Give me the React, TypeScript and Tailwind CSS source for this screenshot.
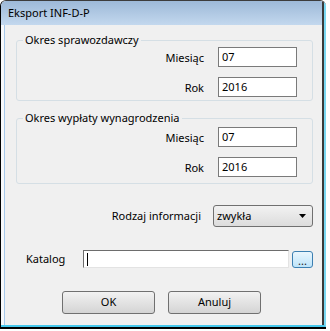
import React from 'react'

const font = { fontFamily: '"Noto Sans", "Open Sans", sans-serif' }

function Field({ label, value }: { label: string; value: string }) {
    return (
        <div className="flex items-center justify-end gap-[14px]">
            <span className="text-[11px] leading-none text-black">{label}</span>
            <div className="w-[79px] h-[20px] border border-[#7a7a7a] bg-white flex items-center pl-[3px] text-[11px] text-black">
                {value}
            </div>
        </div>
    )
}

function Group({ title, height, top, children }: { title: string; height: string; top: string; children: React.ReactNode }) {
    return (
        <div className={`relative ml-[11px] w-[297px] ${height} border border-[#d5dfe5] rounded-[3px] ${top} pr-[15px] flex flex-col gap-[10px]`}>
            {/* legend sits on the border line */}
            <span className="absolute -top-[9px] left-[6px] px-[2px] bg-[#f0f0f0] text-[11px] leading-[16px] text-black">{title}</span>
            {children}
        </div>
    )
}

export default function App() {
    return (
        <div className="w-[330px] h-[331px] bg-white" style={font}>
            <div className="w-[326px] h-[329px] flex flex-col border-l border-t border-b-2 border-l-black border-t-[#3c3c3c] border-b-black rounded-tl-[6px] rounded-tr-[6px] overflow-hidden">
                <div className="flex-1 flex flex-col border-r-2 border-b-2 border-r-[#7ad8f2] border-b-[#46c8ec]">
                    <div className="flex-1 flex flex-col border-r-2 border-r-[#3a3a3a]">
                        {/* Title bar */}
                        <div className="h-[24px] shrink-0 flex items-center pl-[7px] bg-gradient-to-b from-[#9db9d8] to-[#c3d8ee] text-[11px] text-black">
                            Eksport INF-D-P
                        </div>

                        {/* Body */}
                        <div className="flex-1 flex border-l-[3px] border-l-[#f6f8fb]">
                            <div className="flex-1 flex flex-col bg-[#f0f0f0] border-l border-l-[#a6c8ea]">
                                <Group title="Okres sprawozdawczy" height="h-[61px]" top="mt-[15px] pt-[6px]">
                                    <Field label="Miesiąc" value="07" />
                                    <Field label="Rok" value="2016" />
                                </Group>

                                <Group title="Okres wypłaty wynagrodzenia" height="h-[66px]" top="mt-[17px] pt-[8px]">
                                    <Field label="Miesiąc" value="07" />
                                    <Field label="Rok" value="2016" />
                                </Group>

                                {/* Rodzaj informacji */}
                                <div className="mt-[21px] flex items-center justify-end gap-[12px] pr-[9px]">
                                    <span className="text-[11px] text-black">Rodzaj informacji</span>
                                    <div className="w-[100px] h-[22px] border border-[#707070] rounded-[3px] bg-gradient-to-b from-[#f2f2f2] to-[#dcdcdc] flex items-center justify-between pl-[3px] pr-[6px] text-[11px] text-black">
                                        <span>zwykła</span>
                                        <svg width="7" height="4" viewBox="0 0 7 4"><path d="M0 0h7L3.5 4z" fill="#000" /></svg>
                                    </div>
                                </div>

                                {/* Katalog */}
                                <div className="mt-[23px] flex items-center pl-[21px]">
                                    <span className="w-[57px] text-[11px] text-black">Katalog</span>
                                    <div className="w-[206px] h-[18px] bg-white border border-t-[#6d6d6d] border-l-[#6d6d6d] border-r-[#e3e3e3] border-b-[#e3e3e3] flex items-center pl-[3px]">
                                        <div className="w-px h-[13px] bg-black" />
                                    </div>
                                    <div className="ml-[3px] w-[21px] h-[17px] rounded-[3px] border border-[#3c7fb1] bg-gradient-to-b from-[#eaf6fd] to-[#bde4fa] flex items-end justify-center text-[11px] leading-[12px] text-[#1a1a1a]">
                                        ...
                                    </div>
                                </div>

                                {/* Buttons */}
                                <div className="mt-[23px] flex gap-[13px] pl-[57px]">
                                    <button className="w-[93px] h-[23px] rounded-[3px] border border-[#707070] bg-gradient-to-b from-[#f2f2f2] to-[#d4d4d4] text-[11px] text-black">OK</button>
                                    <button className="w-[93px] h-[23px] rounded-[3px] border border-[#707070] bg-gradient-to-b from-[#f2f2f2] to-[#d4d4d4] text-[11px] text-black">Anuluj</button>
                                </div>
                            </div>
                        </div>
                    </div>
                </div>
            </div>
        </div>
    )
}
